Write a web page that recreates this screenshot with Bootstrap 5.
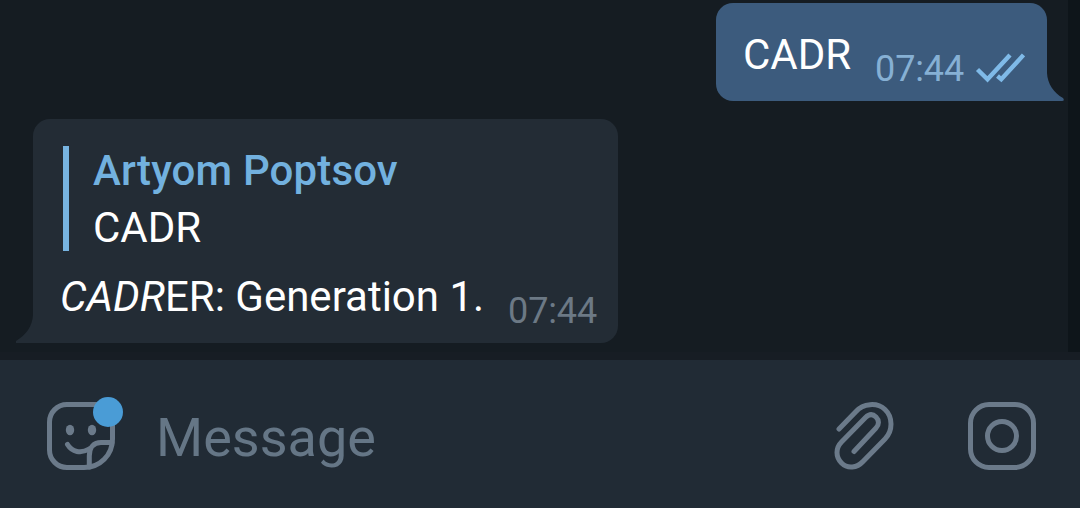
<!DOCTYPE html>
<html lang="en">
<head>
    <meta charset="UTF-8">
    <meta name="viewport" content="width=device-width, initial-scale=1.0">
    <title>Chat</title>
    <link rel="stylesheet" href="https://cdn.jsdelivr.net/npm/bootstrap@5.3.3/dist/css/bootstrap.min.css">
    <style>
        body {
            font-family: Roboto, "Liberation Sans", sans-serif;
            background: #151c22;
            color: #fff;
        }
        svg { display: block; }
        .chat-log {
            height: 360px;
            padding: 3px 33px 0;
            border-bottom: 8px solid #171d24;
        }
        .scroll-track {
            top: 0;
            right: 0;
            width: 12px;
            height: 352px;
            background: #0e151a;
        }
        .bubble { border-radius: 17px; }
        .bubble-out {
            width: 331px;
            height: 98px;
            padding: 27px 22px 11px 27px;
            background: #3c5b7d;
            border-bottom-right-radius: 0;
        }
        .bubble-in {
            width: 585px;
            height: 224px;
            margin-top: 18px;
            padding: 27px 21px 11px 27px;
            background: #232c35;
            border-bottom-left-radius: 0;
        }
        .tail { bottom: 0; width: 18px; height: 28px; }
        .tail-out { left: 100%; margin-left: -1px; }
        .tail-in { right: 100%; margin-right: -1px; }
        .msg-text { font-size: 42px; line-height: 49px; white-space: nowrap; }
        .msg-body { margin-bottom: 11px; }
        .msg-time { font-size: 36px; line-height: 42px; letter-spacing: -.15px; }
        .time-out { color: #86b0d4; }
        .time-in { color: #6c7985; }
        .read-mark { margin: 0 0 4px 9px; }
        .quote {
            height: 105px;
            margin: 0 0 21px 3px;
            padding-left: 24px;
            border-left: 6px solid #77b4e1;
        }
        .quote-name {
            margin-bottom: 8px;
            color: #72b1df;
            font-weight: 500;
            letter-spacing: .15px;
        }
        .composer {
            height: 148px;
            padding: 42px 44px 0 47px;
            background: #212b35;
            color: #6b7a8a;
        }
        .composer-hint {
            font-size: 54px;
            line-height: 63px;
            margin: 4px 0 0 41px;
            color: #657686;
        }
        .composer-actions { gap: 74px; }
        .unread-dot {
            top: -5px;
            left: 46px;
            width: 30px;
            height: 30px;
            background: #4a9cd6;
        }
    </style>
</head>
<body class="overflow-hidden">

<main class="chat-log position-relative d-flex flex-column">
    <div class="scroll-track position-absolute"></div>

    <div class="bubble bubble-out position-relative d-flex align-items-end align-self-end">
        <span class="msg-text msg-body">CADR</span>
        <span class="msg-time time-out ms-auto">07:44</span>
        <svg class="read-mark" width="52" height="34" viewBox="0 0 52 34" fill="none" stroke="#7fbae8" stroke-width="4.4">
            <path d="M4.500 17.500L14.500 27.300L37 3"/>
            <path d="M24.500 24L28.300 27.300L50.500 3"/>
        </svg>
        <svg class="tail tail-out position-absolute" viewBox="0 0 18 28">
            <path d="M0 0H1C1.5 11 8 20 17 25Q19 28 16 28H0Z" fill="#3c5b7d"/>
        </svg>
    </div>

    <div class="bubble bubble-in position-relative">
        <div class="quote">
            <div class="msg-text quote-name">Artyom Poptsov</div>
            <div class="msg-text">CADR</div>
        </div>
        <div class="d-flex align-items-end justify-content-between">
            <span class="msg-text msg-body"><i>CADR</i>ER: Generation 1.</span>
            <span class="msg-time time-in">07:44</span>
        </div>
        <svg class="tail tail-in position-absolute" viewBox="0 0 18 28">
            <path d="M18 0H17C16.5 11 10 20 0 26V28H18Z" fill="#232c35"/>
        </svg>
    </div>
</main>

<footer class="composer d-flex align-items-start">
    <div class="position-relative">
        <svg width="68" height="68" viewBox="0 0 68 68" fill="none" stroke="currentColor" stroke-width="5" stroke-linecap="round">
            <path d="M50 2.500H20A17.500 17.500 0 0 0 2.500 20V48A17.500 17.500 0 0 0 20 65.500H37C53 65.500 65.500 53 65.500 37V18"/>
            <path d="M20.500 42.500C25 50 34 52 42 47"/>
            <path d="M42.300 65V54C42.300 45 47 40.500 54 40.500H65"/>
            <ellipse cx="23" cy="28" rx="4.200" ry="5.200" fill="currentColor" stroke="none"/>
            <ellipse cx="45" cy="28" rx="4.200" ry="5.200" fill="currentColor" stroke="none"/>
        </svg>
        <span class="unread-dot position-absolute rounded-circle"></span>
    </div>
    <div class="composer-hint flex-grow-1">Message</div>
    <div class="composer-actions d-flex">
        <svg width="60" height="68" viewBox="0 0 60 68" fill="none" stroke="currentColor" stroke-width="5" stroke-linecap="round">
            <path d="M5 27L22 9.500C29 1.500 43 0 51 7.500C59 15 59 29 51 37L29 59.500C23 66 13.500 67 7.500 61C1.500 55 1.500 46 7.500 40L31.500 15.500C35.500 11.500 39 12 42 15C45 18 45.500 22.500 42 26L20 49.500"/>
        </svg>
        <svg width="68" height="68" viewBox="0 0 68 68" fill="none" stroke="currentColor" stroke-width="5">
            <rect x="2.500" y="2.500" width="63" height="63" rx="18.500"/>
            <circle cx="34" cy="34" r="14.500"/>
        </svg>
    </div>
</footer>

<script src="https://cdn.jsdelivr.net/npm/bootstrap@5.3.3/dist/js/bootstrap.bundle.min.js"></script>
</body>
</html>
